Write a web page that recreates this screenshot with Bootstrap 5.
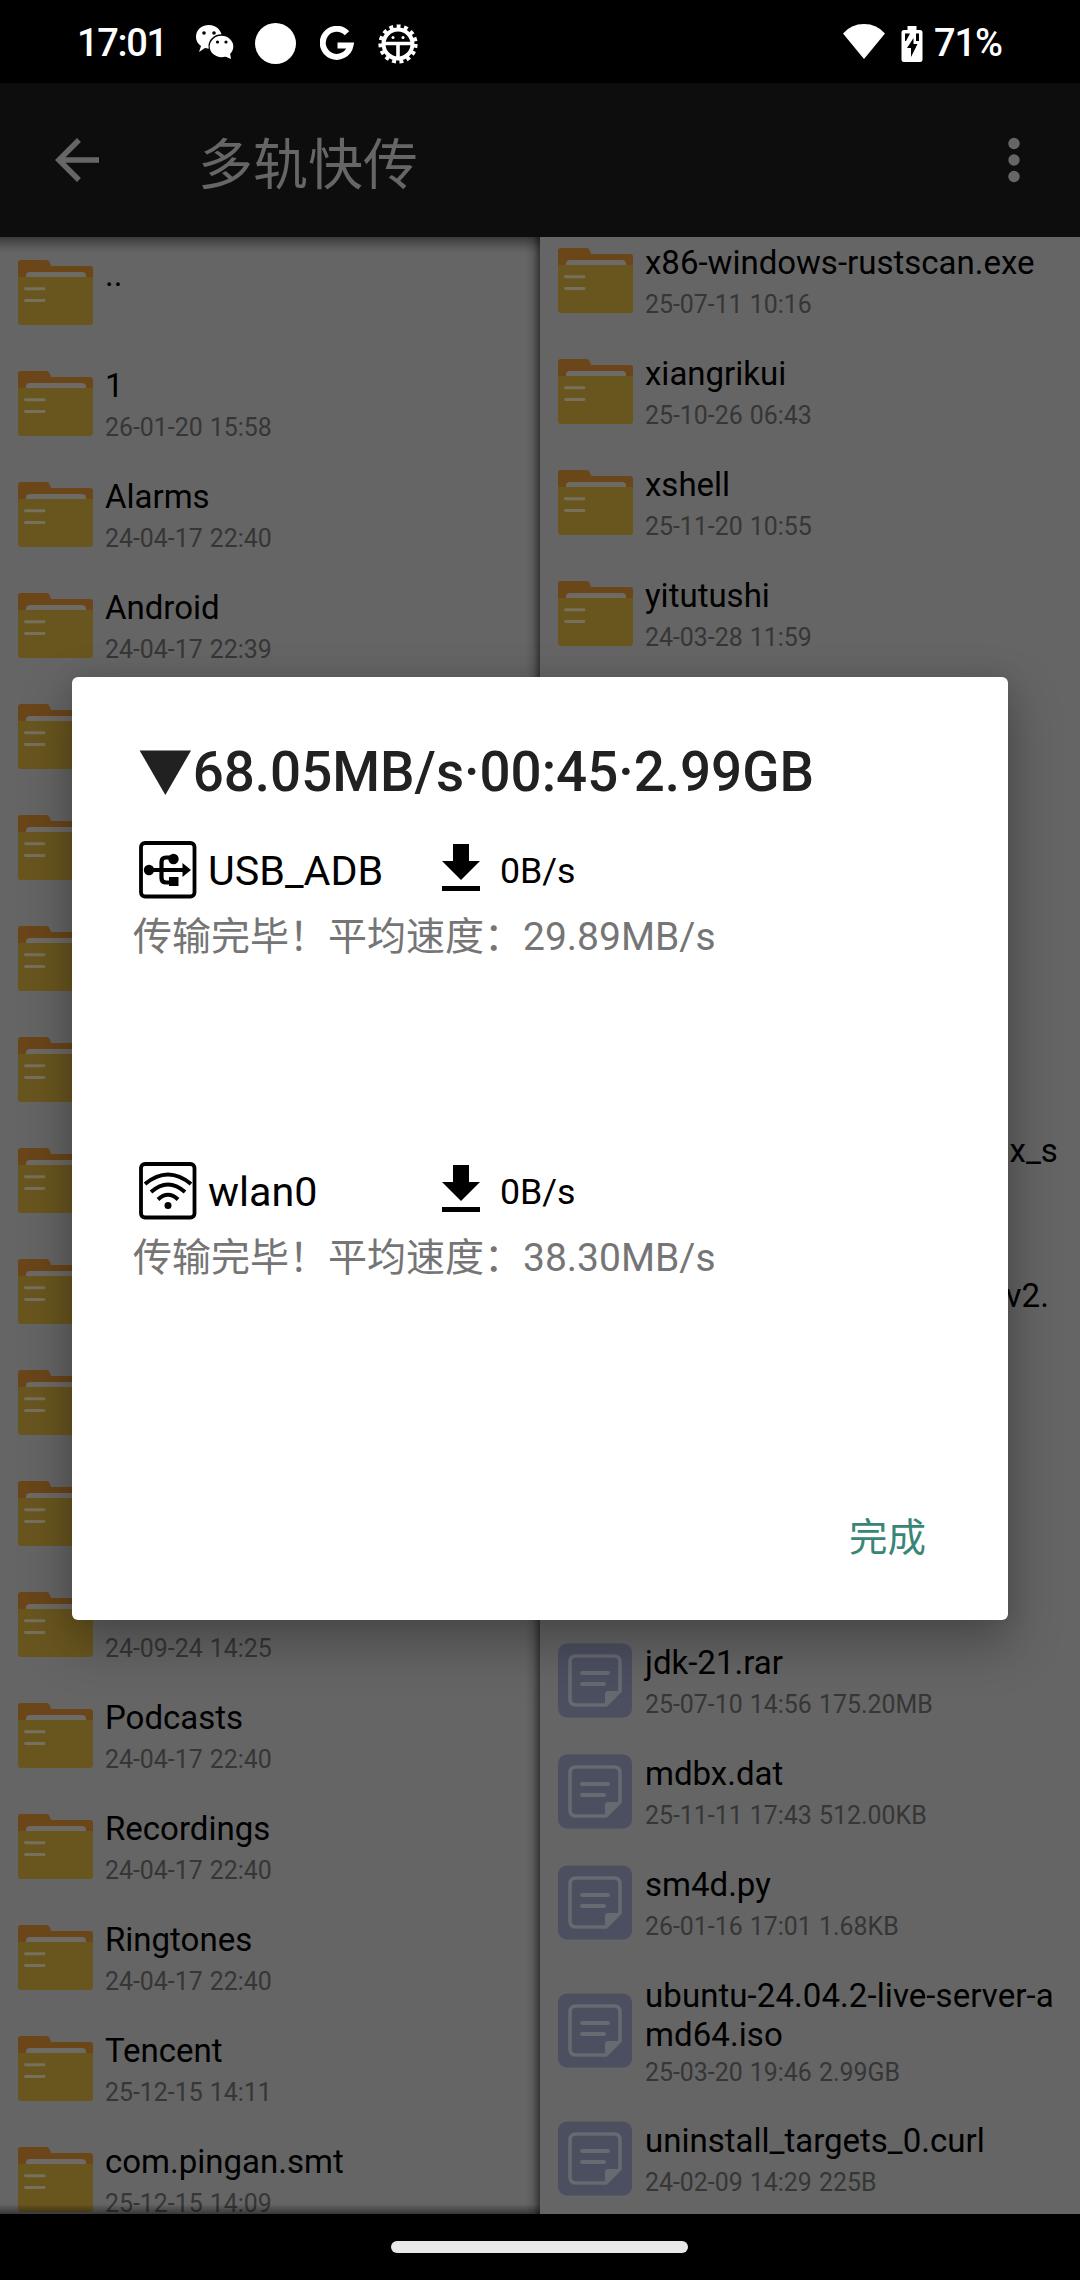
<!DOCTYPE html>
<html lang="zh-CN">
<head>
<meta charset="utf-8">
<meta name="viewport" content="width=device-width, initial-scale=1">
<title>多轨快传</title>
<link href="https://cdn.jsdelivr.net/npm/bootstrap@5.3.0/dist/css/bootstrap.min.css" rel="stylesheet">
<style>
body{width:1080px;height:2280px;font-family:Roboto,"Noto Sans CJK SC",sans-serif;background:#000;line-height:1.172;color:#000}
svg{display:block;flex:none}
.status-bar{height:83px;padding:0 78px 0 77px;color:#fff;font-size:38px;font-weight:500}
.clock{width:118px;letter-spacing:-1.3px;padding-top:4px}
.charge{letter-spacing:-1.1px;margin-left:11px;padding-top:4px}
.glyph-round{margin-left:21px}
.glyph-battery{margin-left:16px}
.app-bar{height:154px;background:#0d0d0d;color:#666;padding:0 51px 0 44px}
.app-title{font-size:55px;line-height:60px;padding:10px 0 0 88px;font-weight:400}
.panes{height:1977px;background:#656565;overflow:hidden}
.pane{width:540px;height:1977px;overflow:hidden}
.pane-left::after{content:"";position:absolute;inset:0;background:
 linear-gradient(to left,rgba(0,0,0,.48),rgba(0,0,0,.12) 7px,transparent 14px),
 linear-gradient(to bottom,rgba(0,0,0,.42),rgba(0,0,0,.15) 9px,transparent 16px),
 linear-gradient(to top,rgba(0,0,0,.45),transparent 10px)}
.pane-right .shifted{margin-top:-12px}
.entry{padding:18px 12px 18px 18px;min-height:111px}
.entry-text{padding-left:12px;min-height:75px}
.entry-name{font-size:33px;line-height:39px;color:#000;white-space:nowrap}
.entry-parent{padding-bottom:36px}
.entry-date{font-size:24.9px;line-height:27px;color:#363636;white-space:nowrap;word-spacing:1px}
.two-line{height:145px}
.two-line .entry-text{min-height:110px}
.two-line .entry-name{letter-spacing:.08px}
.tail-a{padding-right:10px}
.tail-b{padding-right:19px}
.sheet{position:absolute;left:72px;top:677px;width:936px;height:943px;background:#fff;border-radius:6px;padding:63px 64px 0 67px;box-shadow:0 22px 50px 4px rgba(0,0,0,.26),0 0 24px rgba(0,0,0,.1)}
.sheet-title{font-size:54.7px;line-height:65px;font-weight:500;color:#212121;margin:0 0 0 -1px;white-space:nowrap}
.link-block{height:321px;padding-top:36px}
.link-name{font-size:41.25px;width:245px;padding:2px 0 0 11px}
.link-down{margin-bottom:5px}
.link-rate{font-size:35.75px;padding:2px 0 0 20px;line-height:42px}
.link-state{font-size:39px;line-height:50px;color:#757575;margin:13px 0 0 -6px;white-space:nowrap}
.sheet-actions{padding:67px 18px 0 0}
.done-btn{font-size:38.5px;color:#3a8676;line-height:48px;padding:0;border:0}
.nav-area{height:66px;padding-right:1px}
.pill{width:297px;height:12px;background:#e8e8e8}
</style>
<script src="https://cdn.jsdelivr.net/npm/bootstrap@5.3.0/dist/js/bootstrap.bundle.min.js"></script>
</head>
<body class="m-0 overflow-hidden position-relative">
<svg width="0" height="0" class="position-absolute">
 <symbol id="folder" viewBox="0 0 75 75">
  <path d="M0 27V8q0-3 3-3h26q2 0 3 3l1 3h39q3 0 3 3v13z" fill="#6a4619"/>
  <path d="M8 24v-3q0-4 4-4h52q4 0 4 4v3z" fill="#6e6a66"/>
  <path d="M0 22h75v45q0 3-3 3H3q-3 0-3-3z" fill="#69561f"/>
  <path d="M7.500 33.700h18.500M7.500 45.500h18.500" stroke="#77705c" stroke-width="2.900" stroke-linecap="round"/>
 </symbol>
 <symbol id="doc" viewBox="0 0 75 75">
  <rect y=".5" width="74" height="74" rx="9" fill="#4b4f60"/>
  <path d="M18 13h38q6 0 6 6v29L48 62H18q-6 0-6-6V19q0-6 6-6z" fill="none" stroke="#666a71" stroke-width="3.600"/>
  <path d="M47 62V51q0-3 3-3h12z" fill="#666a71"/>
  <path d="M24 30h26M24 41h22" stroke="#666a71" stroke-width="4" stroke-linecap="round"/>
 </symbol>
 <symbol id="down" viewBox="0 0 38 47"><path d="M11 0h16v17h11L19 36 0 17h11zM0 42h38v5H0z"/></symbol>
</svg>

<header class="status-bar d-flex align-items-center justify-content-between">
 <div class="d-flex align-items-center">
  <span class="clock">17:01</span>
  <svg width="39" height="36" viewBox="0 0 39 36"><path d="M14 1C6 1 1 6 1 13c0 4 2 7 5 9l-2 6 6-4q7 2 12-1C31 22 29 1 14 1z" fill="#fff"/><ellipse cx="26.500" cy="22" rx="13" ry="11.800" fill="#000"/><ellipse cx="26.500" cy="22.500" rx="11.800" ry="10.700" fill="#fff"/><path d="M29 32l7 3-1-6z" fill="#fff"/><g fill="#000"><circle cx="9" cy="9" r="1.800"/><circle cx="19" cy="9" r="1.800"/><circle cx="22.500" cy="18" r="1.600"/><circle cx="31" cy="18" r="1.600"/></g></svg>
  <svg class="glyph-round mt-1" width="41" height="41" viewBox="0 0 41 41"><circle cx="20.500" cy="20.500" r="20.500" fill="#fff"/></svg>
  <svg class="ms-4 mt-1" width="34" height="35" viewBox="0 0 34 35"><path d="M27 7.300A14 14 0 1 0 30.500 19.500H17.500" fill="none" stroke="#fff" stroke-width="6"/></svg>
  <svg class="ms-4 mt-1" width="40" height="40" viewBox="0 0 40 40"><circle cx="20" cy="20" r="17.600" fill="none" stroke="#fff" stroke-width="4" stroke-dasharray="3.900 3.470"/><circle cx="20" cy="20" r="14.500" fill="none" stroke="#fff" stroke-width="4"/><path d="M6 19.500h28M20 20v16" stroke="#fff" stroke-width="3.600"/><g fill="#fff"><circle cx="15" cy="13.500" r="1.500"/><circle cx="25" cy="13.500" r="1.500"/></g></svg>
 </div>
 <div class="d-flex align-items-center">
  <svg width="42" height="35" viewBox="0 0 42 35"><path d="M0 9.500Q8 0 21 0t21 9.500L21 35z" fill="#fff"/></svg>
  <svg class="glyph-battery mt-1" width="22" height="36" viewBox="0 0 22 36"><path d="M6.500 0h9v4H19q2.500 0 2.500 2.500v27Q21.500 36 19 36H3Q.5 36 .5 33.500v-27Q.5 4 3 4h3.500z" fill="#fff"/><path d="M4 7.500h5L5 15H4zM18 7.500v7.500h-3V7.500zM12.500 12v6h4L10 31v-9H6z" fill="#000"/></svg>
  <span class="charge">71%</span>
 </div>
</header>

<nav class="app-bar d-flex align-items-center">
 <svg width="66" height="66" viewBox="0 0 24 24"><path d="M20 11H7.830l5.590-5.590L12 4l-8 8 8 8 1.410-1.410L7.830 13H20z" fill="#666"/></svg>
 <h1 class="app-title m-0 flex-grow-1">多轨快传</h1>
 <svg width="30" height="46" viewBox="0 0 30 46"><g fill="#666"><circle cx="15" cy="6.500" r="5.700"/><circle cx="15" cy="23" r="5.700"/><circle cx="15" cy="39.500" r="5.700"/></g></svg>
</nav>

<main class="panes d-flex">
 <section class="pane pane-left position-relative">
  <div class="entry d-flex"><svg width="75" height="75"><use href="#folder"/></svg><div class="entry-text d-flex flex-column justify-content-center"><div class="entry-name entry-parent">..</div></div></div>
  <div class="entry d-flex"><svg width="75" height="75"><use href="#folder"/></svg><div class="entry-text d-flex flex-column justify-content-between"><div class="entry-name">1</div><div class="entry-date">26-01-20 15:58</div></div></div>
  <div class="entry d-flex"><svg width="75" height="75"><use href="#folder"/></svg><div class="entry-text d-flex flex-column justify-content-between"><div class="entry-name">Alarms</div><div class="entry-date">24-04-17 22:40</div></div></div>
  <div class="entry d-flex"><svg width="75" height="75"><use href="#folder"/></svg><div class="entry-text d-flex flex-column justify-content-between"><div class="entry-name">Android</div><div class="entry-date">24-04-17 22:39</div></div></div>
  <div class="entry d-flex"><svg width="75" height="75"><use href="#folder"/></svg></div>
  <div class="entry d-flex"><svg width="75" height="75"><use href="#folder"/></svg></div>
  <div class="entry d-flex"><svg width="75" height="75"><use href="#folder"/></svg></div>
  <div class="entry d-flex"><svg width="75" height="75"><use href="#folder"/></svg></div>
  <div class="entry d-flex"><svg width="75" height="75"><use href="#folder"/></svg></div>
  <div class="entry d-flex"><svg width="75" height="75"><use href="#folder"/></svg></div>
  <div class="entry d-flex"><svg width="75" height="75"><use href="#folder"/></svg></div>
  <div class="entry d-flex"><svg width="75" height="75"><use href="#folder"/></svg></div>
  <div class="entry d-flex"><svg width="75" height="75"><use href="#folder"/></svg><div class="entry-text d-flex flex-column justify-content-end"><div class="entry-date">24-09-24 14:25</div></div></div>
  <div class="entry d-flex"><svg width="75" height="75"><use href="#folder"/></svg><div class="entry-text d-flex flex-column justify-content-between"><div class="entry-name">Podcasts</div><div class="entry-date">24-04-17 22:40</div></div></div>
  <div class="entry d-flex"><svg width="75" height="75"><use href="#folder"/></svg><div class="entry-text d-flex flex-column justify-content-between"><div class="entry-name">Recordings</div><div class="entry-date">24-04-17 22:40</div></div></div>
  <div class="entry d-flex"><svg width="75" height="75"><use href="#folder"/></svg><div class="entry-text d-flex flex-column justify-content-between"><div class="entry-name">Ringtones</div><div class="entry-date">24-04-17 22:40</div></div></div>
  <div class="entry d-flex"><svg width="75" height="75"><use href="#folder"/></svg><div class="entry-text d-flex flex-column justify-content-between"><div class="entry-name">Tencent</div><div class="entry-date">25-12-15 14:11</div></div></div>
  <div class="entry d-flex"><svg width="75" height="75"><use href="#folder"/></svg><div class="entry-text d-flex flex-column justify-content-between"><div class="entry-name">com.pingan.smt</div><div class="entry-date">25-12-15 14:09</div></div></div>
 </section>
 <section class="pane pane-right">
  <div class="shifted">
  <div class="entry d-flex"><svg width="75" height="75"><use href="#folder"/></svg><div class="entry-text d-flex flex-column justify-content-between"><div class="entry-name">x86-windows-rustscan.exe</div><div class="entry-date">25-07-11 10:16</div></div></div>
  <div class="entry d-flex"><svg width="75" height="75"><use href="#folder"/></svg><div class="entry-text d-flex flex-column justify-content-between"><div class="entry-name">xiangrikui</div><div class="entry-date">25-10-26 06:43</div></div></div>
  <div class="entry d-flex"><svg width="75" height="75"><use href="#folder"/></svg><div class="entry-text d-flex flex-column justify-content-between"><div class="entry-name">xshell</div><div class="entry-date">25-11-20 10:55</div></div></div>
  <div class="entry d-flex"><svg width="75" height="75"><use href="#folder"/></svg><div class="entry-text d-flex flex-column justify-content-between"><div class="entry-name">yitutushi</div><div class="entry-date">24-03-28 11:59</div></div></div>
  <div class="entry"></div>
  <div class="entry"></div>
  <div class="entry"></div>
  <div class="entry"></div>
  <div class="entry two-line text-end"><div class="entry-name tail-a">x_s</div></div>
  <div class="entry two-line text-end"><div class="entry-name tail-b">v2.</div></div>
  <div class="entry"></div>
  <div class="entry"></div>
  <div class="entry d-flex"><svg width="75" height="75"><use href="#doc"/></svg><div class="entry-text d-flex flex-column justify-content-between"><div class="entry-name">jdk-21.rar</div><div class="entry-date">25-07-10 14:56 175.20MB</div></div></div>
  <div class="entry d-flex"><svg width="75" height="75"><use href="#doc"/></svg><div class="entry-text d-flex flex-column justify-content-between"><div class="entry-name">mdbx.dat</div><div class="entry-date">25-11-11 17:43 512.00KB</div></div></div>
  <div class="entry d-flex"><svg width="75" height="75"><use href="#doc"/></svg><div class="entry-text d-flex flex-column justify-content-between"><div class="entry-name">sm4d.py</div><div class="entry-date">26-01-16 17:01 1.68KB</div></div></div>
  <div class="entry two-line d-flex align-items-center"><svg width="75" height="75"><use href="#doc"/></svg><div class="entry-text d-flex flex-column justify-content-between"><div class="entry-name">ubuntu-24.04.2-live-server-a<br>md64.iso</div><div class="entry-date">25-03-20 19:46 2.99GB</div></div></div>
  <div class="entry d-flex"><svg width="75" height="75"><use href="#doc"/></svg><div class="entry-text d-flex flex-column justify-content-between"><div class="entry-name">uninstall_targets_0.curl</div><div class="entry-date">24-02-09 14:29 225B</div></div></div>
  </div>
 </section>
</main>

<footer class="nav-area d-flex align-items-center justify-content-center"><div class="pill rounded-pill"></div></footer>

<div class="sheet" role="dialog">
 <h2 class="sheet-title">▼68.05MB/s·00:45·2.99GB</h2>
 <div class="link-block">
  <div class="d-flex align-items-center">
   <svg width="58" height="58" viewBox="0 0 58 58"><rect x="2" y="2" width="53.500" height="53.500" rx="4" fill="none" stroke="#000" stroke-width="3.800"/><path d="M9 29h36M22.500 29V21q0-4.500 4.500-4.500h6M22.500 29v8q0 4.500 4.500 4.500h5" fill="none" stroke="#000" stroke-width="4.200"/><circle cx="10" cy="29" r="5.200"/><circle cx="34.500" cy="18" r="5.200"/><path d="M43.500 22l8.500 7-8.500 7zM30 36h9.500v9H30z"/></svg>
   <span class="link-name">USB_ADB</span>
   <svg class="link-down" width="38" height="47"><use href="#down"/></svg>
   <span class="link-rate">0B/s</span>
  </div>
  <div class="link-state">传输完毕！平均速度：29.89MB/s</div>
 </div>
 <div class="link-block">
  <div class="d-flex align-items-center">
   <svg width="58" height="58" viewBox="0 0 58 58"><rect x="2" y="2" width="53.500" height="53.500" rx="4" fill="none" stroke="#000" stroke-width="3.800"/><path d="M6 22Q29 3 52 22M12 30Q29 15 46 30M19 37.500Q29 28 39 37.500" fill="none" stroke="#000" stroke-width="4"/><circle cx="29" cy="43.500" r="3.500"/></svg>
   <span class="link-name">wlan0</span>
   <svg class="link-down" width="38" height="47"><use href="#down"/></svg>
   <span class="link-rate">0B/s</span>
  </div>
  <div class="link-state">传输完毕！平均速度：38.30MB/s</div>
 </div>
 <div class="sheet-actions d-flex justify-content-end"><button class="btn done-btn">完成</button></div>
</div>
</body>
</html>
